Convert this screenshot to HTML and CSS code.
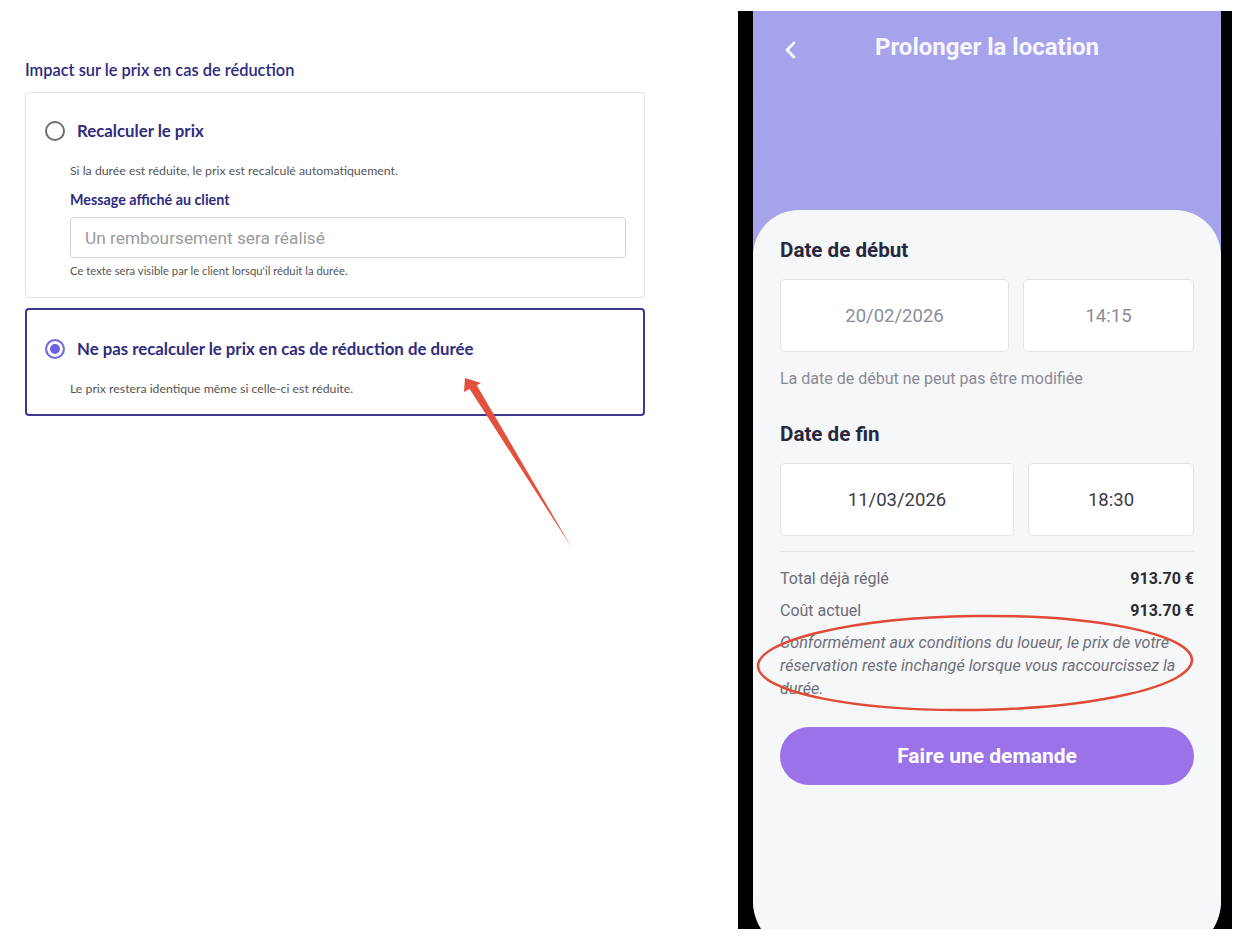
FILE: index.html
```html
<!DOCTYPE html>
<html lang="fr">
<head>
    <meta charset="UTF-8" />
    <meta name="viewport" content="width=device-width, initial-scale=1.0" />
    <title>Réduction de durée</title>
    <link rel="stylesheet" href="styles.css">
</head>
<body>
    <main class="layout">
        <!-- Back-office setting -->
        <section class="settings">
            <h2 class="settings-title">Impact sur le prix en cas de réduction</h2>

            <div class="option-card">
                <div class="option-row">
                    <span class="radio"></span>
                    <span class="option-label">Recalculer le prix</span>
                </div>
                <div class="option-body">
                    <p class="option-desc">Si la durée est réduite, le prix est recalculé automatiquement.</p>
                    <label for="client-message" class="field-label">Message affiché au client</label>
                    <input type="text" id="client-message" class="field-input" placeholder="Un remboursement sera réalisé" />
                    <p class="field-hint">Ce texte sera visible par le client lorsqu'il réduit la durée.</p>
                </div>
            </div>

            <div class="option-card option-card-active">
                <div class="option-row">
                    <span class="radio radio-checked"></span>
                    <span class="option-label">Ne pas recalculer le prix en cas de réduction de durée</span>
                </div>
                <div class="option-body">
                    <p class="option-desc">Le prix restera identique même si celle-ci est réduite.</p>
                </div>
            </div>
        </section>

        <!-- Mobile app preview -->
        <div class="phone">
            <div class="screen">
                <header class="app-bar">
                    <span class="back-btn">
                        <svg width="14" height="18" viewBox="0 0 14 18">
                            <path d="M10 2 L3 9 L10 16" fill="none" stroke="#fff" stroke-width="2.6" stroke-linecap="round" stroke-linejoin="round" />
                        </svg>
                    </span>
                    <h1 class="app-title">Prolonger la location</h1>
                </header>

                <div class="sheet">
                    <h3 class="sheet-heading">Date de début</h3>
                    <div class="date-row">
                        <div class="date-box date-box-disabled">20/02/2026</div>
                        <div class="date-box date-box-disabled time-box">14:15</div>
                    </div>
                    <p class="sheet-note">La date de début ne peut pas être modifiée</p>

                    <h3 class="sheet-heading sheet-heading-end">Date de fin</h3>
                    <div class="date-row">
                        <div class="date-box">11/03/2026</div>
                        <div class="date-box time-box time-box-end">18:30</div>
                    </div>

                    <div class="price-list">
                        <div class="price-row">
                            <span>Total déjà réglé</span>
                            <strong>913.70 €</strong>
                        </div>
                        <div class="price-row">
                            <span>Coût actuel</span>
                            <strong>913.70 €</strong>
                        </div>
                    </div>
                    <p class="price-info">Conformément aux conditions du loueur, le prix de votre réservation reste inchangé lorsque vous raccourcissez la durée.</p>

                    <button class="btn-main" type="button">Faire une demande</button>
                </div>
            </div>
        </div>
    </main>

    <!-- Red annotations drawn over the screenshot -->
    <svg class="annotations" width="1249" height="946" viewBox="0 0 1249 946">
        <polygon points="469,388 476,384 572,548" fill="#e2513c" />
        <polygon points="465,378 481,383 464,392" fill="#e2513c" />
        <ellipse cx="975" cy="663" rx="217" ry="47" transform="rotate(-0.8 975 663)" fill="none" stroke="#e04a36" stroke-width="2.5" />
    </svg>
</body>
</html>
```

FILE: styles.css
```css
*,
*::before,
*::after {
    box-sizing: border-box;
}

html,
body {
    margin: 0;
    padding: 0;
    background: #fff;
}

body {
    position: relative;
    width: 1249px;
    height: 946px;
    overflow: hidden;
    font-family: 'Lato', 'Open Sans', sans-serif;
}

p,
h1,
h2,
h3 {
    margin: 0;
}

.layout {
    display: flex;
    align-items: flex-start;
    padding-left: 25px;
}

/* Back-office setting */
.settings {
    width: 620px;
    padding-top: 60px;
}

.settings-title {
    font-size: 16.4px;
    line-height: 20px;
    font-weight: 600;
    color: #2c2980;
    margin-bottom: 12px;
}

.option-card {
    border: 1px solid #e2e2e2;
    border-radius: 4px;
    padding: 28px 18px 19px 19px;
    background: #fff;
}

.option-card-active {
    margin-top: 10px;
    border: 2px solid #3d3a8c;
    padding: 29px 18px 17px 18px;
}

.option-row {
    display: flex;
    align-items: center;
    gap: 12px;
    height: 20px;
}

.radio {
    width: 20px;
    height: 20px;
    border-radius: 50%;
    border: 2px solid #6d6d6d;
    flex-shrink: 0;
}

.radio-checked {
    border-color: #7169e4;
    background: #6a5fe6;
    box-shadow: inset 0 0 0 3px #fff;
}

.option-label {
    font-size: 16.8px;
    font-weight: 700;
    color: #2f2b7d;
    line-height: 20px;
}

.option-body {
    padding-left: 25px;
}

.option-desc {
    margin-top: 22px;
    font-size: 12.3px;
    line-height: 16px;
    color: #555;
}

.field-label {
    display: block;
    margin-top: 12px;
    font-size: 14.3px;
    line-height: 18px;
    font-weight: 700;
    color: #2f2b7d;
}

.field-input {
    display: block;
    width: 556px;
    height: 41px;
    margin-top: 8px;
    padding: 0 14px;
    border: 1px solid #d3d3d3;
    border-radius: 4px;
    font-family: 'Roboto', 'Liberation Sans', sans-serif;
    font-size: 17.3px;
    color: #333;
}

.field-input::placeholder {
    color: #9b9b9b;
}

.field-hint {
    margin-top: 6px;
    font-size: 11.3px;
    line-height: 14px;
    color: #555;
}

/* Mobile preview */
.phone {
    margin-left: 93px;
    margin-top: 11px;
    width: 494px;
    height: 918px;
    padding: 0 11px 0 15px;
    background: #000;
    overflow: hidden;
}

.screen {
    height: 942px;
    display: flex;
    flex-direction: column;
    background: linear-gradient(180deg, #a6a2ec 0%, #aaa7e8 100%);
    border-radius: 0 0 52px 52px;
    overflow: hidden;
    font-family: 'Roboto', 'Liberation Sans', sans-serif;
}

.app-bar {
    position: relative;
    height: 199px;
    padding-top: 22px;
    text-align: center;
}

.back-btn {
    position: absolute;
    left: 31px;
    top: 30px;
}

.app-title {
    font-size: 24px;
    line-height: 28px;
    font-weight: 700;
    color: #f7f6ff;
}

.sheet {
    flex: 1;
    background: #f6f7f9;
    border-radius: 46px 46px 0 0;
    padding: 28px 27px 0;
}

.sheet-heading {
    font-size: 20.6px;
    line-height: 24px;
    font-weight: 700;
    color: #282741;
}

.sheet-heading-end {
    margin-top: 33px;
}

.date-row {
    display: flex;
    gap: 14px;
    margin-top: 17px;
}

.date-box {
    flex: 1;
    height: 73px;
    display: flex;
    align-items: center;
    justify-content: center;
    background: #fff;
    border: 1px solid #e3e4e9;
    border-radius: 5px;
    font-size: 18.5px;
    color: #3a3a46;
}

.date-box-disabled {
    color: #8c8c97;
}

.time-box {
    flex: 0 0 171px;
}

.time-box-end {
    flex-basis: 166px;
}

.sheet-note {
    margin-top: 17px;
    font-size: 16px;
    line-height: 20px;
    color: #8a8a95;
}

.price-list {
    margin-top: 15px;
    padding-top: 17px;
    border-top: 1px solid #e6e7eb;
    display: flex;
    flex-direction: column;
    gap: 12px;
}

.price-row {
    display: flex;
    justify-content: space-between;
    font-size: 16px;
    line-height: 20px;
    color: #6c6c77;
}

.price-row strong {
    color: #2b2b35;
    font-weight: 700;
}

.price-info {
    margin-top: 10px;
    font-size: 16.2px;
    line-height: 23px;
    font-style: italic;
    color: #6e6e79;
}

.btn-main {
    display: block;
    width: 100%;
    height: 58px;
    margin-top: 27px;
    border: none;
    border-radius: 29px;
    background: #9b72e8;
    color: #fff;
    font-family: 'Roboto', 'Liberation Sans', sans-serif;
    font-size: 21px;
    font-weight: 700;
}

/* Annotations */
.annotations {
    position: absolute;
    top: 0;
    left: 0;
    pointer-events: none;
}
```
